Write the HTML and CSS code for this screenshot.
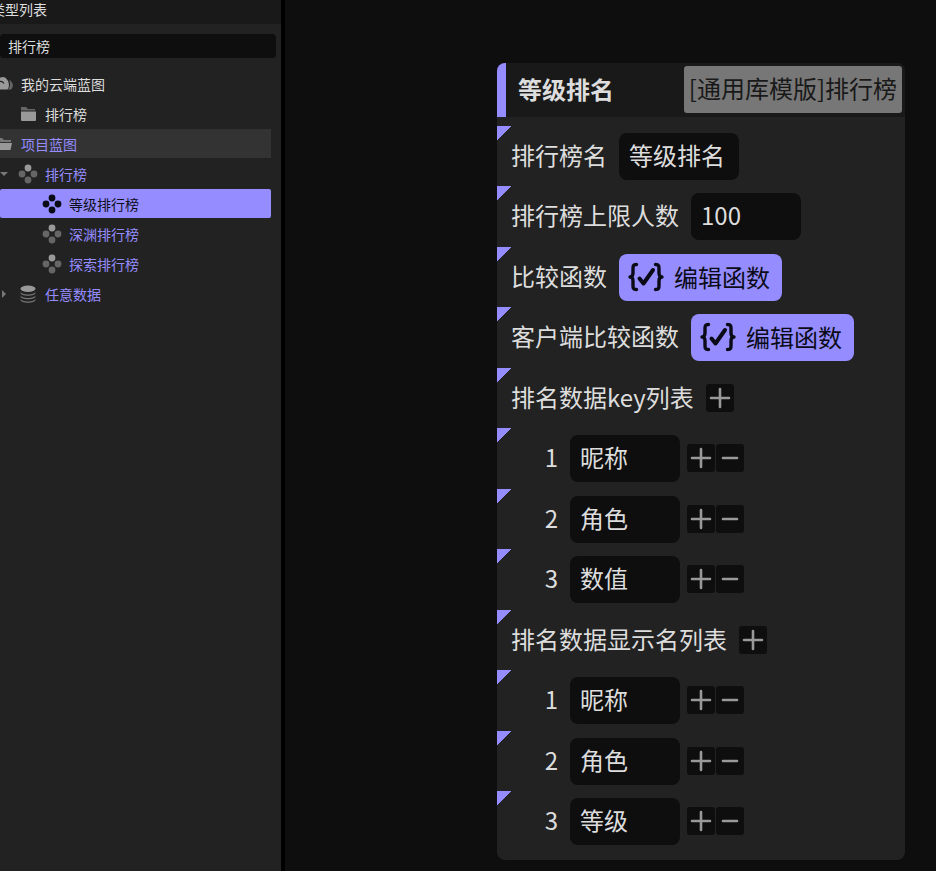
FILE: index.html
```html
<!DOCTYPE html>
<html lang="zh-CN">
<head>
    <meta charset="UTF-8">
    <meta name="viewport" content="width=device-width, initial-scale=1.0">
    <title>类型列表</title>
    <link rel="stylesheet" href="styles.css">
</head>
<body>

<!-- 公用图标 -->
<svg class="sprite" aria-hidden="true">
    <symbol id="icon-cloud" viewBox="0 0 20 20">
        <path d="M15 6c3.500 1 5.500 6.500 2 9.500h-3c2.500-3 2.500-6.500 1-9.500z" fill="#666"/>
        <path d="M3 15.500a4.200 4.200 0 0 1 .5-8A5.200 5.200 0 0 1 13 5.500c2.500 3 2.500 7.500.5 10z" fill="#999"/>
        <path d="M5.500 7.500c2-.5 3.500.3 4.500 2" fill="none" stroke="#222" stroke-width="1.200"/>
    </symbol>
    <symbol id="icon-folder" viewBox="0 0 20 20">
        <path d="M3 3h5l2 2h7v1.500H3z" fill="#666"/>
        <path d="M3 7.500h15V16a1 1 0 0 1-1 1H4a1 1 0 0 1-1-1z" fill="#999"/>
    </symbol>
    <symbol id="icon-folder-open" viewBox="0 0 20 20">
        <path d="M2 4h6l2 2h7v2H6l-3 6z" fill="#777"/>
        <path d="M5.500 9H18l-1.500 7H2.500z" fill="#999"/>
    </symbol>
    <symbol id="icon-nodes" viewBox="0 0 20 20">
        <circle class="dot-top" cx="10" cy="4" r="3.400"/>
        <circle cx="4" cy="10" r="3.400"/>
        <circle cx="16" cy="10" r="3.400"/>
        <circle cx="10" cy="16" r="3.400"/>
    </symbol>
    <symbol id="icon-data" viewBox="0 0 20 20">
        <path d="M2.500 7.500c0 4 15 4 15 0v1.300c0 4-15 4-15 0zM2.500 11c0 4 15 4 15 0v1.300c0 4-15 4-15 0zM2.500 14.500c0 4 15 4 15 0v1.300c0 4-15 4-15 0z" fill="#777"/>
        <ellipse cx="10" cy="4.800" rx="7.500" ry="3.200" fill="#999"/>
    </symbol>
    <symbol id="icon-func" viewBox="0 0 36 30">
        <g fill="none" stroke="currentColor" stroke-width="3.400" stroke-linecap="round" stroke-linejoin="round">
            <path d="M8.500 2.500C5 2.500 5 4 5 7v4c0 2.500-.8 4-3 4 2.200 0 3 1.500 3 4v4c0 3 0 4.500 3.500 4.500"/>
            <path d="M27.500 2.500C31 2.500 31 4 31 7v4c0 2.500.8 4 3 4-2.200 0-3 1.500-3 4v4c0 3 0 4.500-3.500 4.500"/>
            <path d="M11.500 16.500l4 5L25 8" stroke-width="4"/>
        </g>
    </symbol>
    <symbol id="icon-plus" viewBox="0 0 28 28">
        <path d="M14 5v18M5 14h18" stroke="#999" stroke-width="2.600" stroke-linecap="round"/>
    </symbol>
    <symbol id="icon-minus" viewBox="0 0 28 28">
        <path d="M7 14h14" stroke="#999" stroke-width="2.600" stroke-linecap="round"/>
    </symbol>
</svg>

<div class="app">
    <aside class="sidebar">
        <h1 class="sidebar-title">类型列表</h1>
        <input class="search" type="text" value="排行榜" aria-label="搜索">
        <ul class="tree">
            <li>
                <button class="tree-item"><svg class="icon"><use href="#icon-cloud"/></svg>我的云端蓝图</button>
                <ul>
                    <li><button class="tree-item"><svg class="icon"><use href="#icon-folder"/></svg>排行榜</button></li>
                </ul>
            </li>
            <li class="project">
                <button class="tree-item hover"><svg class="icon"><use href="#icon-folder-open"/></svg>项目蓝图</button>
                <ul>
                    <li>
                        <button class="tree-item open"><svg class="icon"><use href="#icon-nodes"/></svg>排行榜</button>
                        <ul>
                            <li><button class="tree-item selected"><svg class="icon"><use href="#icon-nodes"/></svg>等级排行榜</button></li>
                            <li><button class="tree-item"><svg class="icon"><use href="#icon-nodes"/></svg>深渊排行榜</button></li>
                            <li><button class="tree-item"><svg class="icon"><use href="#icon-nodes"/></svg>探索排行榜</button></li>
                        </ul>
                    </li>
                    <li><button class="tree-item closed"><svg class="icon"><use href="#icon-data"/></svg>任意数据</button></li>
                </ul>
            </li>
        </ul>
    </aside>

    <main class="canvas">
        <section class="node">
            <header class="node-header">
                <h2>等级排名</h2>
                <span class="tag">[通用库模版]排行榜</span>
            </header>
            <div class="node-body">
                <div class="row">
                    <label for="rank-name">排行榜名</label>
                    <input class="field wide" id="rank-name" type="text" value="等级排名">
                </div>
                <div class="row">
                    <label for="rank-limit">排行榜上限人数</label>
                    <input class="field" id="rank-limit" type="text" value="100">
                </div>
                <div class="row">
                    <span>比较函数</span>
                    <button class="edit"><svg><use href="#icon-func"/></svg>编辑函数</button>
                </div>
                <div class="row">
                    <span>客户端比较函数</span>
                    <button class="edit"><svg><use href="#icon-func"/></svg>编辑函数</button>
                </div>
                <div class="row">
                    <span>排名数据key列表</span>
                    <button class="square" aria-label="添加"><svg><use href="#icon-plus"/></svg></button>
                </div>
                <div class="row">
                    <label class="index" for="key-1">1</label>
                    <input class="field" id="key-1" type="text" value="昵称">
                    <div class="actions">
                        <button class="square" aria-label="添加"><svg><use href="#icon-plus"/></svg></button>
                        <button class="square" aria-label="删除"><svg><use href="#icon-minus"/></svg></button>
                    </div>
                </div>
                <div class="row">
                    <label class="index" for="key-2">2</label>
                    <input class="field" id="key-2" type="text" value="角色">
                    <div class="actions">
                        <button class="square" aria-label="添加"><svg><use href="#icon-plus"/></svg></button>
                        <button class="square" aria-label="删除"><svg><use href="#icon-minus"/></svg></button>
                    </div>
                </div>
                <div class="row">
                    <label class="index" for="key-3">3</label>
                    <input class="field" id="key-3" type="text" value="数值">
                    <div class="actions">
                        <button class="square" aria-label="添加"><svg><use href="#icon-plus"/></svg></button>
                        <button class="square" aria-label="删除"><svg><use href="#icon-minus"/></svg></button>
                    </div>
                </div>
                <div class="row">
                    <span>排名数据显示名列表</span>
                    <button class="square" aria-label="添加"><svg><use href="#icon-plus"/></svg></button>
                </div>
                <div class="row">
                    <label class="index" for="show-1">1</label>
                    <input class="field" id="show-1" type="text" value="昵称">
                    <div class="actions">
                        <button class="square" aria-label="添加"><svg><use href="#icon-plus"/></svg></button>
                        <button class="square" aria-label="删除"><svg><use href="#icon-minus"/></svg></button>
                    </div>
                </div>
                <div class="row">
                    <label class="index" for="show-2">2</label>
                    <input class="field" id="show-2" type="text" value="角色">
                    <div class="actions">
                        <button class="square" aria-label="添加"><svg><use href="#icon-plus"/></svg></button>
                        <button class="square" aria-label="删除"><svg><use href="#icon-minus"/></svg></button>
                    </div>
                </div>
                <div class="row">
                    <label class="index" for="show-3">3</label>
                    <input class="field" id="show-3" type="text" value="等级">
                    <div class="actions">
                        <button class="square" aria-label="添加"><svg><use href="#icon-plus"/></svg></button>
                        <button class="square" aria-label="删除"><svg><use href="#icon-minus"/></svg></button>
                    </div>
                </div>
            </div>
        </section>
    </main>
</div>

</body>
</html>
```
FILE: styles.css
```css
* {
    box-sizing: border-box;
}
body {
    margin: 0;
    background-color: #0e0e0e;
    color: #ddd;
    font-family: "Noto Sans CJK SC", sans-serif;
    font-size: 14px;
}
button,
input {
    margin: 0;
    border: none;
    font: inherit;
    color: inherit;
    outline: none;
}
button {
    cursor: pointer;
}
.sprite {
    position: absolute;
    width: 0;
    height: 0;
}
.app {
    display: flex;
    min-height: 100vh;
}

/* 左侧类型列表 */
.sidebar {
    flex: 0 0 285px;
    border-right: 4px solid #000;
    background-color: #222;
    overflow: hidden;
}
.sidebar-title {
    height: 24px;
    margin: 0 0 10px;
    background-color: #191919;
    font-size: 14px;
    font-weight: normal;
    line-height: 18px;
    text-indent: -9px;
}
.search {
    display: block;
    width: 276px;
    height: 24px;
    padding: 0 8px;
    border-radius: 4px;
    background-color: #0e0e0e;
}
.tree {
    margin: 11px 10px 0 0;
}
.tree,
.tree ul {
    padding: 0;
    list-style: none;
}
.tree ul {
    margin: 0;
}
.tree-item {
    position: relative;
    display: flex;
    align-items: center;
    gap: 7px;
    width: 100%;
    height: 29px;
    margin-bottom: 1px;
    padding: 0;
    background: none;
    line-height: 28px;
    text-align: left;
}
.tree > li > .tree-item {
    margin-left: -6px;
    width: calc(100% + 6px);
}
.tree ul .tree-item {
    padding-left: 18px;
}
.tree ul ul .tree-item {
    padding-left: 42px;
}
.icon {
    flex: none;
    width: 20px;
    height: 20px;
    fill: #666;
}
.dot-top {
    fill: var(--dot, #999);
}
.project {
    color: #958dff;
}
.tree-item.hover {
    background-color: #333;
}
.tree-item.selected {
    border-radius: 2px;
    background-color: #958dff;
    color: #0e0e1a;
}
.selected .icon {
    fill: #0b0b18;
    --dot: #0b0b18;
}
.open::before,
.closed::before {
    content: "";
    position: absolute;
    left: 0;
    border: 4px solid transparent;
}
.open::before {
    top: 13px;
    border-top-color: #777;
}
.closed::before {
    left: 2px;
    top: 11px;
    border-left-color: #777;
}

/* 画布与节点 */
.canvas {
    flex: 1;
    padding: 63px 31px 11px 212px;
}
.node {
    border-radius: 8px;
    background-color: #222;
    font-size: 24px;
    overflow: hidden;
}
.node-header {
    display: flex;
    align-items: flex-start;
    justify-content: space-between;
    height: 54px;
    padding: 3px 3px 0 12px;
    border-left: 9px solid #958dff;
    background-color: #191919;
    line-height: 43px;
    white-space: nowrap;
}
.node-header h2 {
    margin: 0;
    font-size: 24px;
    line-height: 46px;
}
.tag {
    height: 47px;
    padding: 0 5px;
    border-radius: 3px;
    background-color: #777;
    color: #191919;
}
.node-body {
    padding: 9px 0 8px;
}
.row {
    display: flex;
    align-items: flex-start;
    gap: 12px;
    height: 60px;
    padding: 7px 0 0 14px;
    background: linear-gradient(135deg, #958dff 10px, transparent 10px) no-repeat;
    line-height: 43px;
    white-space: nowrap;
}
.row:nth-child(even) {
    height: 61px;
}
.index {
    width: 47px;
    text-align: right;
}
.field {
    width: 110px;
    height: 47px;
    padding: 0 10px 4px;
    border-radius: 8px;
    background-color: #0e0e0e;
}
.field.wide {
    width: 120px;
}
.edit {
    display: flex;
    align-items: center;
    gap: 10px;
    height: 47px;
    padding: 0 12px 3px 9px;
    border-radius: 8px;
    background-color: #958dff;
    color: #0b0b18;
    line-height: 43px;
}
.edit svg {
    width: 36px;
    height: 30px;
    margin-top: 2px;
}
.square {
    width: 28px;
    height: 28px;
    margin-top: 9px;
    padding: 0;
    border-radius: 3px;
    background-color: #0e0e0e;
}
.square svg {
    display: block;
    width: 28px;
    height: 28px;
}
.actions {
    display: flex;
    gap: 1px;
    margin-left: -5px;
}
```
